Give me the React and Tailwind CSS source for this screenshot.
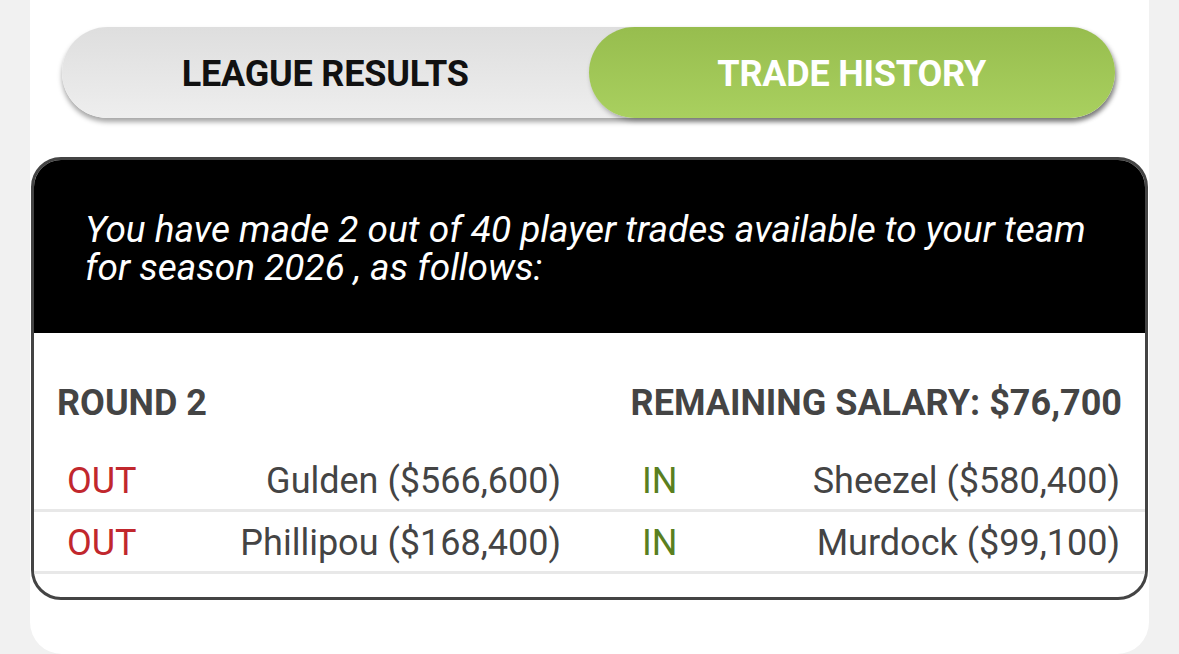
import React from 'react';

const trades = [
  { out: 'Gulden ($566,600)', inn: 'Sheezel ($580,400)' },
  { out: 'Phillipou ($168,400)', inn: 'Murdock ($99,100)' },
];

export default function App() {
  return (
    <div className="h-[654px] overflow-hidden bg-[#f1f1f1] px-[30px] font-['Roboto',sans-serif]">
      <div className="h-full bg-white rounded-b-[32px] pt-[27px]">
        {/* toggle */}
        <div className="mx-[32px] mr-[34px] flex h-[91px] rounded-full bg-gradient-to-b from-[#dedede] to-[#eeeeee] shadow-[0_4px_5px_rgba(0,0,0,0.35)]">
          <button className="flex-1 flex items-center justify-center pt-[3px] text-[36px] font-bold text-[#111] tracking-[-0.2px]">LEAGUE RESULTS</button>
          <button className="flex-1 flex items-center justify-center pt-[3px] rounded-full bg-gradient-to-b from-[#97bd4e] to-[#a9d05f] text-[36px] font-bold text-white tracking-[-0.2px] shadow-[2px_3px_5px_rgba(0,0,0,0.3)]">TRADE HISTORY</button>
        </div>

        {/* card */}
        <div className="mt-[39px] mx-[1px] h-[443px] rounded-[30px] border-[3px] border-[#444] overflow-hidden">
          <div className="h-[173px] bg-black pl-[51px] pr-[40px] pt-[51px]">
            <p className="text-white italic text-[37px] leading-[38px]">
              You have made 2 out of 40 player trades available to your team for season 2026 , as follows:
            </p>
          </div>
          <div className="pt-[50px]">
            <div className="flex justify-between items-center pl-[23px] pr-[23px] text-[#444] font-bold text-[36px] leading-[40px]">
              <span>ROUND 2</span>
              <span>REMAINING SALARY: $76,700</span>
            </div>
            <div className="mt-[27px]">
              {trades.map((t, i) => (
                <div key={i} className="flex items-center h-[62px] border-b-[3px] border-[#e8e8e8] text-[36px] text-[#444] pt-[3px]">
                  <div className="w-[560px] flex justify-between pl-[33px] pr-[33px]">
                    <span className="text-[#c1272d]">OUT</span>
                    <span>{t.out}</span>
                  </div>
                  <div className="flex-1 flex justify-between pl-[48px] pr-[25px]">
                    <span className="text-[#5a7f1f]">IN</span>
                    <span>{t.inn}</span>
                  </div>
                </div>
              ))}
            </div>
          </div>
        </div>
      </div>
    </div>
  );
}
